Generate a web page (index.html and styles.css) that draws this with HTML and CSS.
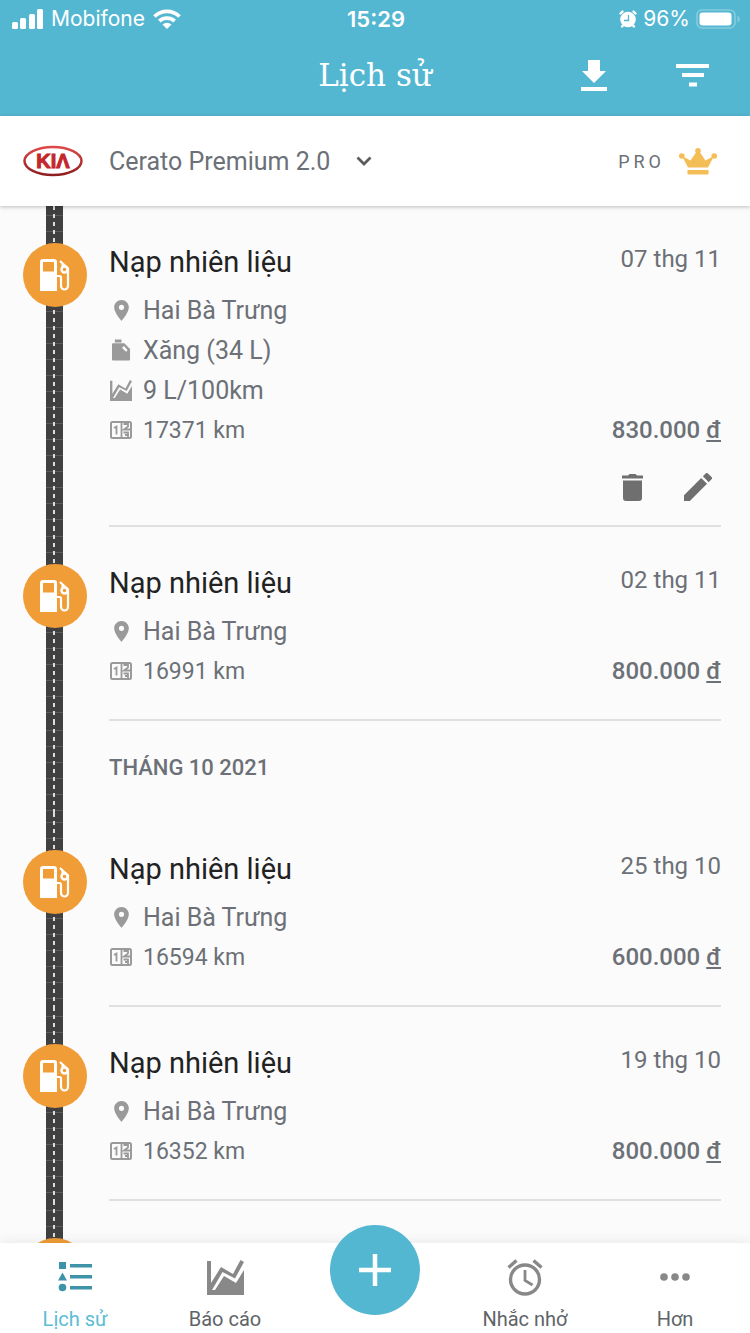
FILE: index.html
```html
<!DOCTYPE html>
<html lang="vi">
<head>
<meta charset="utf-8">
<meta name="viewport" content="width=device-width, initial-scale=1">
<title>Lịch sử</title>
<link rel="stylesheet" href="styles.css">
</head>
<body>
<svg class="sprite" aria-hidden="true">
  <symbol id="pump" viewBox="0 0 30 32">
    <path fill="currentColor" fill-rule="evenodd" d="M3 0h11a3 3 0 0 1 3 3v29H0V3a3 3 0 0 1 3-3zm0 3v9.500h11V3z"/>
    <path fill="none" stroke="currentColor" stroke-width="2.200" d="M17 17h2.500a1.500 1.500 0 0 1 1.500 1.500v8.500a3.500 3.500 0 0 0 7 0V9.500L20 2"/>
    <circle cx="24.500" cy="10.500" r="3" fill="none" stroke="currentColor" stroke-width="2.400"/>
    <path fill="none" stroke="currentColor" stroke-width="2" d="M22.500 4.500v4.500"/>
  </symbol>
  <symbol id="pin" viewBox="5 2 14 20">
    <path fill="currentColor" d="M12 2C8.130 2 5 5.130 5 9c0 5.250 7 13 7 13s7-7.750 7-13c0-3.870-3.130-7-7-7zm0 9.500a2.500 2.500 0 1 1 0-5 2.500 2.500 0 0 1 0 5z"/>
  </symbol>
  <symbol id="can" viewBox="0 0 20 22">
    <path fill="currentColor" fill-rule="evenodd" d="M3 0h7v3H3zM1 4h12l6 6v11a1 1 0 0 1-1 1H1a1 1 0 0 1-1-1V5a1 1 0 0 1 1-1zm10.500 3.500c-.8.800-.8 1.700 0 2.300l3 2.700c1.800.300 2-1.500 1.200-2.300l-2.500-2.600c-.6-.500-1.200-.600-1.700-.100z"/>
  </symbol>
  <symbol id="chart" viewBox="0 0 37 35">
    <path fill="currentColor" d="M0 1h4v22L14 7l12 7L33.500 0 37 2 28 18.500 15.500 12 5 30h3l9-14 12 7 8-13v25H0z"/>
  </symbol>
  <symbol id="odometer" viewBox="0 0 22 18">
    <rect x="1" y="1" width="20" height="16" rx="1.500" fill="none" stroke="currentColor" stroke-width="2"/>
    <path fill="none" stroke="currentColor" stroke-width="1.800" d="M11.500 1v16M4 7l2.500-1.500V13.500M13.500 3h4.500v2.500L14 8.500h6M13.500 11.500H18V16M15 14h3.500"/>
  </symbol>
</svg>

<header class="top">
  <div class="status">
    <div class="status-side">
      <svg class="signal" viewBox="0 0 31 20" aria-hidden="true"><g fill="#fff"><rect y="13" width="6" height="7" rx="1.500"/><rect x="8" y="9" width="6" height="11" rx="1.500"/><rect x="17" y="5" width="6" height="15" rx="1.500"/><rect x="25" width="6" height="20" rx="1.500"/></g></svg>
      <span>Mobifone</span>
      <svg class="wifi" viewBox="0 0 28 20" aria-hidden="true"><g fill="none" stroke="#fff" stroke-width="3.800"><path d="M1.500 7.500a18 18 0 0 1 25 0"/><path d="M6.300 12a11.500 11.500 0 0 1 15.400 0"/></g><path fill="#fff" d="M9.500 15.500a7 7 0 0 1 9 0L14 20z"/></svg>
    </div>
    <time class="clock">15:29</time>
    <div class="status-side status-right">
      <svg class="alarm-small" viewBox="0 0 18 18" aria-hidden="true"><circle cx="9" cy="9.500" r="7.800" fill="#fff"/><g stroke="#fff" stroke-width="2.400" stroke-linecap="round"><path d="M1.500 3.500l2-2M16.500 3.500l-2-2M3 16.500l2-2M15 16.500l-2-2"/></g><path d="M9.500 5v5.500H5" fill="none" stroke="#54b7d1" stroke-width="1.300"/></svg>
      <span>96%</span>
      <svg class="battery" viewBox="0 0 44 20" aria-hidden="true"><rect x="1" y="1" width="38" height="18" rx="5" fill="none" stroke="#85ccde" stroke-width="1.600"/><rect x="3.500" y="3.500" width="32" height="13" rx="3" fill="#fff"/><path d="M41.500 6.500c3 1.500 3 5.500 0 7z" fill="#85ccde"/></svg>
    </div>
  </div>
  <div class="titlebar">
    <h1 class="title">Lịch sử</h1>
    <div class="actions">
      <button class="icon-button" aria-label="Tải xuống"><svg class="download" viewBox="0 0 26 31"><path fill="#fff" d="M7 0h12v11h6L13 23 1 11h6zM0 27h26v4H0z"/></svg></button>
      <button class="icon-button" aria-label="Bộ lọc"><svg class="filter" viewBox="0 0 33 23"><path fill="#fff" d="M0 0h33v4H0zM6 9h22v4H6zM13 18.500h8v4h-8z"/></svg></button>
    </div>
  </div>
</header>

<section class="vehicle">
  <svg class="brand" viewBox="0 0 60 32" role="img" aria-label="Kia">
    <defs><linearGradient id="red" x1="0" y1="0" x2="0" y2="1"><stop offset="0" stop-color="#df4848"/><stop offset="1" stop-color="#8e1e20"/></linearGradient></defs>
    <ellipse cx="30" cy="16" rx="28.500" ry="14" fill="#fff" stroke="url(#red)" stroke-width="2.500"/>
    <text class="brand-text" x="30" y="23" text-anchor="middle">KIΛ</text>
  </svg>
  <button class="vehicle-button">Cerato Premium 2.0
    <svg class="chevron" viewBox="0 0 16 10" aria-hidden="true"><path d="M1.500 1.500L8 8l6.500-6.500" fill="none" stroke="#5c5c5c" stroke-width="2.800"/></svg>
  </button>
  <button class="pro">PRO
    <svg class="crown" viewBox="0 0 38 27" aria-hidden="true"><g fill="#f5bd55"><circle cx="2.800" cy="8" r="2.800"/><circle cx="19" cy="2.800" r="2.800"/><circle cx="35.200" cy="8" r="2.800"/><path d="M3 8l8.500 4.500L18 3h2l6.500 9.500L35 8l-6 11.500H9zM8.500 22h21v4.500h-21z"/></g></svg>
  </button>
</section>

<main class="history">
  <article class="entry">
    <div class="node"><svg class="pump"><use href="#pump"/></svg></div>
    <div class="body">
      <div class="line head"><h2 class="name">Nạp nhiên liệu</h2><time class="date">07 thg 11</time></div>
      <div class="line"><span class="ico"><svg class="pin"><use href="#pin"/></svg></span>Hai Bà Trưng</div>
      <div class="line"><span class="ico"><svg class="can"><use href="#can"/></svg></span>Xăng (34 L)</div>
      <div class="line"><span class="ico"><svg class="mini-chart"><use href="#chart"/></svg></span>9 L/100km</div>
      <div class="line"><span class="ico"><svg class="odo"><use href="#odometer"/></svg></span><span class="distance">17371 km</span><strong class="price">830.000 <u>đ</u></strong></div>
      <div class="tools">
        <button class="tool" aria-label="Xóa"><svg class="trash" viewBox="0 0 21 27"><path fill="#6f6f6f" d="M0 1.500h6L7.500 0h6L15 1.500h6v3H0zM1 6.500h19V24a3 3 0 0 1-3 3H4a3 3 0 0 1-3-3z"/></svg></button>
        <button class="tool" aria-label="Sửa"><svg class="pencil" viewBox="3 3 18 18"><path fill="#6f6f6f" d="M3 17.250V21h3.750L17.810 9.940l-3.750-3.750L3 17.250zM20.710 7.040a1 1 0 0 0 0-1.410l-2.340-2.340a1 1 0 0 0-1.410 0l-1.830 1.830 3.750 3.750 1.830-1.830z"/></svg></button>
      </div>
    </div>
  </article>

  <article class="entry">
    <div class="node"><svg class="pump"><use href="#pump"/></svg></div>
    <div class="body">
      <div class="line head"><h2 class="name">Nạp nhiên liệu</h2><time class="date">02 thg 11</time></div>
      <div class="line"><span class="ico"><svg class="pin"><use href="#pin"/></svg></span>Hai Bà Trưng</div>
      <div class="line"><span class="ico"><svg class="odo"><use href="#odometer"/></svg></span><span class="distance">16991 km</span><strong class="price">800.000 <u>đ</u></strong></div>
    </div>
  </article>

  <h3 class="month">THÁNG 10 2021</h3>

  <article class="entry">
    <div class="node"><svg class="pump"><use href="#pump"/></svg></div>
    <div class="body">
      <div class="line head"><h2 class="name">Nạp nhiên liệu</h2><time class="date">25 thg 10</time></div>
      <div class="line"><span class="ico"><svg class="pin"><use href="#pin"/></svg></span>Hai Bà Trưng</div>
      <div class="line"><span class="ico"><svg class="odo"><use href="#odometer"/></svg></span><span class="distance">16594 km</span><strong class="price">600.000 <u>đ</u></strong></div>
    </div>
  </article>

  <article class="entry">
    <div class="node"><svg class="pump"><use href="#pump"/></svg></div>
    <div class="body">
      <div class="line head"><h2 class="name">Nạp nhiên liệu</h2><time class="date">19 thg 10</time></div>
      <div class="line"><span class="ico"><svg class="pin"><use href="#pin"/></svg></span>Hai Bà Trưng</div>
      <div class="line"><span class="ico"><svg class="odo"><use href="#odometer"/></svg></span><span class="distance">16352 km</span><strong class="price">800.000 <u>đ</u></strong></div>
    </div>
  </article>

  <article class="entry">
    <div class="node"><svg class="pump"><use href="#pump"/></svg></div>
  </article>
</main>

<nav class="tabs">
  <a class="tab active" href="#history"><span class="tab-icon"><svg class="list-icon" viewBox="0 0 34 30"><g fill="#3f93a8"><path d="M1 0h7v7H1zM4.500 10.500L9 18.500H0zM12 2h22v3.500H12zM12 13h22v3.500H12zM12 24h22v3.500H12z"/><circle cx="4.500" cy="25.500" r="3.800"/></g></svg></span>Lịch sử</a>
  <a class="tab" href="#report"><span class="tab-icon"><svg class="big-chart"><use href="#chart"/></svg></span>Báo cáo</a>
  <button class="add" aria-label="Thêm"><svg class="plus" viewBox="0 0 32 32"><path d="M16 0v32M0 16h32" stroke="#fff" stroke-width="4.500"/></svg></button>
  <a class="tab" href="#reminder"><span class="tab-icon"><svg class="alarm" viewBox="0 0 36 37"><g fill="none" stroke="#888" stroke-width="3.400"><circle cx="18" cy="20.500" r="14.500"/><path d="M1.500 8.500l8-7M34.500 8.500l-8-7"/><path d="M18 11v10.500l7.500 4.500" stroke-width="2.800"/></g></svg></span>Nhắc nhở</a>
  <a class="tab" href="#more"><span class="tab-icon"><svg class="dots" viewBox="0 0 30 8"><g fill="#888"><circle cx="4" cy="4" r="3.800"/><circle cx="15" cy="4" r="3.800"/><circle cx="26" cy="4" r="3.800"/></g></svg></span>Hơn</a>
</nav>
</body>
</html>
```
FILE: styles.css
```css
* { box-sizing: border-box; margin: 0; padding: 0; }

body {
  height: 100vh;
  display: flex;
  flex-direction: column;
  overflow: hidden;
  background: #fbfbfb;
  color: #6c7077;
  font-family: Roboto, "Noto Sans", sans-serif;
  font-size: 25px;
}

button { border: 0; background: none; color: inherit; font: inherit; }
svg { display: block; flex: none; }
.sprite { width: 0; height: 0; position: absolute; }

/* header */
.top { flex: none; background: #54b7d1; color: #fff; }
.status {
  display: grid;
  grid-template-columns: 1fr auto 1fr;
  align-items: center;
  height: 37px;
  padding: 0 10px 0 12px;
  font: 21px Inter, "Noto Sans", sans-serif;
}
.status-side { display: flex; align-items: center; gap: 8px; }
.status-right { justify-content: flex-end; gap: 6px; }
.clock { font-size: 22px; font-weight: 600; }
.signal { width: 31px; height: 20px; }
.wifi { width: 28px; height: 20px; }
.alarm-small { width: 18px; height: 18px; }
.battery { width: 44px; height: 20px; }

.titlebar {
  display: grid;
  grid-template-columns: 1fr auto 1fr;
  align-items: center;
  height: 79px;
  padding: 0 34px 3px;
}
.title { grid-column: 2; font: 31px "DejaVu Serif", serif; }
.actions { display: flex; justify-content: flex-end; gap: 50px; }
.icon-button { display: flex; align-items: center; justify-content: center; width: 48px; height: 48px; }
.download { width: 26px; height: 31px; }
.filter { width: 33px; height: 23px; }

/* vehicle bar */
.vehicle {
  position: relative;
  flex: none;
  display: flex;
  align-items: center;
  height: 90px;
  padding: 0 33px 0 23px;
  background: #fff;
  box-shadow: 0 1px 4px rgba(0, 0, 0, .25);
}
.brand { width: 60px; height: 32px; }
.brand-text { font: bold 20px "Liberation Sans", sans-serif; fill: #c4262b; stroke: #c4262b; stroke-width: 1px; }
.vehicle-button { display: flex; align-items: center; gap: 26px; margin-left: 26px; }
.chevron { width: 16px; height: 10px; }
.pro { display: flex; align-items: center; gap: 14px; margin-left: auto; font-size: 18px; letter-spacing: 4px; }
.crown { width: 38px; height: 27px; }

/* timeline */
.history { flex: 1; min-height: 0; overflow-y: auto; scrollbar-width: none; }
.entry, .month {
  background:
    repeating-linear-gradient(#ddd 0 4px, transparent 4px 8px) 53px 0 / 2px 100% no-repeat,
    repeating-linear-gradient(transparent 0 9px, #5c5c5c 9px 10px, transparent 10px 16px) 46px 0 / 17px 100% no-repeat,
    linear-gradient(#404040, #404040) 46px 0 / 17px 100% no-repeat;
}
.entry { display: flex; align-items: flex-start; gap: 22px; padding: 37px 29px 0 23px; }
.node {
  flex: none;
  display: flex;
  align-items: center;
  justify-content: center;
  width: 64px;
  height: 64px;
  border-radius: 50%;
  background: #f09d38;
  color: #fff;
}
.pump { width: 30px; height: 32px; }
.body { flex: 1; padding: 1px 0 28px; border-bottom: 2px solid #e0e0e0; }
.line { display: flex; align-items: center; height: 40px; }
.head { align-items: flex-start; height: 46px; }
.name { color: #222; font-size: 29px; font-weight: 400; line-height: 36px; }
.date { margin-left: auto; font-size: 24px; line-height: 30px; }
.ico { display: flex; justify-content: center; width: 24px; margin-right: 10px; color: #9a9a9a; }
.pin { width: 15px; height: 21px; }
.can { width: 19px; height: 22px; }
.mini-chart { width: 22px; height: 21px; }
.odo { width: 22px; height: 18px; }
.distance { font-size: 23px; }
.price { margin-left: auto; font-size: 24px; font-weight: 500; }
.tools { display: flex; justify-content: flex-end; gap: 20px; height: 47px; padding-top: 7px; }
.tool { display: flex; align-items: center; justify-content: center; width: 46px; height: 60px; }
.trash { width: 21px; height: 27px; }
.pencil { width: 28px; height: 28px; }
.month { height: 92px; padding-left: 109px; font-size: 22px; font-weight: 500; line-height: 94px; }

/* bottom tabs */
.tabs {
  position: relative;
  flex: none;
  display: grid;
  grid-template-columns: repeat(5, 1fr);
  height: 90px;
  background: #fff;
  box-shadow: 0 -1px 12px rgba(0, 0, 0, .08);
}
.tab { display: flex; flex-direction: column; align-items: center; color: #606468; font-size: 20px; line-height: 24px; text-decoration: none; }
.active { color: #5bbcd5; }
.tab-icon { display: flex; align-items: center; height: 64px; padding-top: 4px; color: #888; }
.list-icon { width: 34px; height: 30px; }
.big-chart { width: 37px; height: 35px; }
.alarm { width: 36px; height: 37px; }
.dots { width: 30px; height: 8px; }
.add {
  display: flex;
  align-items: center;
  justify-content: center;
  justify-self: center;
  width: 90px;
  height: 90px;
  margin-top: -18px;
  border-radius: 50%;
  background: #54b7d1;
}
.plus { width: 32px; height: 32px; }
```
